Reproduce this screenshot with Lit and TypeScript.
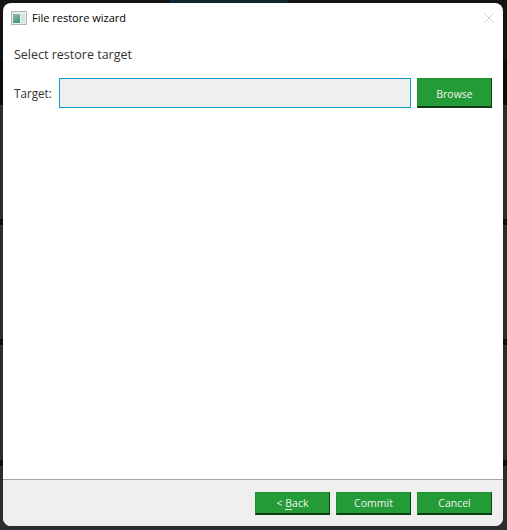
import { LitElement, html, css } from "lit";
import { customElement } from "lit/decorators.js";

@customElement("app-root")
export class AppRoot extends LitElement {
  static styles = css`
    :host {
      display: block;
      width: 507px;
      height: 530px;
      overflow: hidden;
      font-family: "Open Sans", "Liberation Sans", Arial, sans-serif;
      font-size: 12px;
      color: #222;
      background:
        linear-gradient(#10252f, #10252f) 170px 0 / 118px 3px no-repeat,
        linear-gradient(#0c0c0c, #0c0c0c) 0 60px / 100% 45px no-repeat,
        linear-gradient(#0c0c0c, #0c0c0c) 0 219px / 100% 6px no-repeat,
        linear-gradient(#0c0c0c, #0c0c0c) 0 339px / 100% 6px no-repeat,
        linear-gradient(#0c0c0c, #0c0c0c) 0 460px / 100% 6px no-repeat,
        linear-gradient(#141414, #141414) 0 0 / 100% 60px no-repeat,
        #2a2c2e;
    }
    .shell { padding: 3px 4px 4px 3px; height: 530px; box-sizing: border-box; }
    .win {
      height: 523px;
      background: #fff;
      border-radius: 8px;
      overflow: hidden;
      display: flex;
      flex-direction: column;
    }
    .title {
      display: flex;
      align-items: center;
      height: 29px;
      padding: 0 8px 0 8px;
      gap: 5px;
      color: #000;
      flex: none;
      font-size: 11px;
    }
    .title span { flex: 1; }
    .main { flex: 1; padding: 15px 11px 0; }
    .heading { font-size: 12.5px; line-height: 16px; color: #333; }
    .row { display: flex; align-items: center; margin-top: 15px; }
    .label { width: 45px; font-size: 11.7px; flex: none; color: #333; }
    .field {
      flex: none;
      width: 352px;
      height: 30px;
      box-sizing: border-box;
      border: 1px solid #0a9cc4;
      background: #efefef;
      margin-right: 6px;
    }
    .btn {
      width: 75px;
      height: 30px;
      box-sizing: border-box;
      flex: none;
      padding: 0;
      background: #239b36;
      border: 1px solid #1f9030;
      border-right-color: #0b4413;
      border-bottom: 2px solid #0b3d12;
      color: #f2f2f2;
      font: 10.5px "Open Sans", "Liberation Sans", Arial, sans-serif;
    }
    .btn u { text-underline-offset: 2px; }
    .browse { padding-top: 2px; }
    .footer {
      flex: none;
      height: 47px;
      box-sizing: border-box;
      background: #efefef;
      border-top: 1px solid #a5a5a5;
      display: flex;
      justify-content: flex-end;
      align-items: flex-start;
      gap: 6px;
      padding: 12px 11px 0 0;
    }
    .footer .btn { height: 23px; }
  `;

  render() {
    return html`<div class="shell"><div class="win">
      <div class="title">
        <svg width="16" height="14" viewBox="0 0 16 14">
          <defs>
            <linearGradient id="pane" x1="0" y1="0" x2="0.3" y2="1">
              <stop offset="0" stop-color="#8fb4c8"/>
              <stop offset="1" stop-color="#4a9a78"/>
            </linearGradient>
          </defs>
          <rect x=".5" y=".5" width="15" height="13" fill="#eef0f0" stroke="#b4b4b4"/>
          <rect x="2" y="3" width="7" height="9" fill="url(#pane)"/>
          <rect x="10" y="3" width="4" height="9" fill="#d6e2e0"/>
        </svg>
        <span>File restore wizard</span>
        <svg width="12" height="12" viewBox="0 0 12 12">
          <path d="M1 1L11 11M11 1L1 11" stroke="#cfcfcf" stroke-width="1" fill="none"/>
        </svg>
      </div>
      <div class="main">
        <div class="heading">Select restore target</div>
        <div class="row">
          <div class="label">Target:</div>
          <div class="field"></div>
          <button class="btn browse">Browse</button>
        </div>
      </div>
      <div class="footer">
        <button class="btn">&lt; <u>B</u>ack</button>
        <button class="btn">Commit</button>
        <button class="btn">Cancel</button>
      </div>
    </div></div>`;
  }
}
